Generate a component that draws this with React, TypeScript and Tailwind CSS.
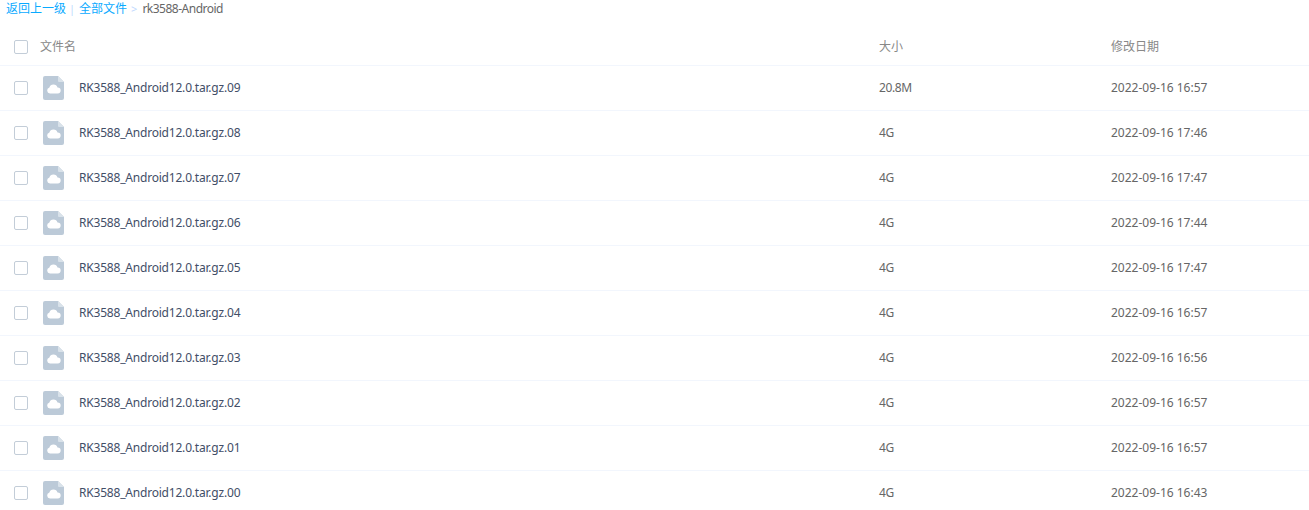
const files = [
  { name: "RK3588_Android12.0.tar.gz.09", size: "20.8M", time: "2022-09-16 16:57" },
  { name: "RK3588_Android12.0.tar.gz.08", size: "4G", time: "2022-09-16 17:46" },
  { name: "RK3588_Android12.0.tar.gz.07", size: "4G", time: "2022-09-16 17:47" },
  { name: "RK3588_Android12.0.tar.gz.06", size: "4G", time: "2022-09-16 17:44" },
  { name: "RK3588_Android12.0.tar.gz.05", size: "4G", time: "2022-09-16 17:47" },
  { name: "RK3588_Android12.0.tar.gz.04", size: "4G", time: "2022-09-16 16:57" },
  { name: "RK3588_Android12.0.tar.gz.03", size: "4G", time: "2022-09-16 16:56" },
  { name: "RK3588_Android12.0.tar.gz.02", size: "4G", time: "2022-09-16 16:57" },
  { name: "RK3588_Android12.0.tar.gz.01", size: "4G", time: "2022-09-16 16:57" },
  { name: "RK3588_Android12.0.tar.gz.00", size: "4G", time: "2022-09-16 16:43" },
];

function FileIcon() {
  return (
    <svg width="21" height="24" viewBox="0 0 21 24" className="shrink-0">
      <path d="M2 0H15L21 6V22a2 2 0 0 1-2 2H2a2 2 0 0 1-2-2V2a2 2 0 0 1 2-2Z" fill="#bccad8" />
      <path d="M15 0L21 6H16a1 1 0 0 1-1-1Z" fill="#d9e2ea" />
      <path
        d="M7 17.5a3 3 0 0 1-.6-5.9 4.2 4.2 0 0 1 8.1-.1 3 3 0 0 1 .3 6Z"
        fill="#ffffff"
      />
    </svg>
  );
}

function Check() {
  return <span className="block w-[14px] h-[14px] rounded-[2px] border border-[#c3cdd8] bg-white shrink-0" />;
}

export default function App() {
  return (
    <div className="w-[1309px] h-[510px] overflow-hidden bg-white text-[12px] text-[#666] font-['Noto_Sans','Noto_Sans_CJK_SC',sans-serif]">
      <div className="h-[17px] pl-[6px] flex items-center leading-[17px]">
        <span className="text-[#09aaff]">返回上一级</span>
        <span className="text-[#c0d9fe] ml-[3px] mr-[4px] text-[11px]">|</span>
        <span className="text-[#09aaff]">全部文件</span>
        <span className="text-[#c0d9fe] ml-[4px] mr-[5px] text-[11px]">&gt;</span>
        <span className="text-[#666] tracking-[-0.5px]">rk3588-Android</span>
      </div>
      <div className="h-[49px] pt-[12px] flex items-center border-b border-[#f2f6fd] text-[#888]">
        <div className="w-[40px] pl-[14px] shrink-0"><Check /></div>
        <div className="w-[839px]">文件名</div>
        <div className="w-[232px]">大小</div>
        <div>修改日期</div>
      </div>
      {files.map((f) => (
        <div key={f.name} className="h-[45px] flex items-center border-b border-[#f2f6fd]">
          <div className="w-[43px] pl-[14px] shrink-0"><Check /></div>
          <div className="w-[36px] shrink-0"><FileIcon /></div>
          <div className="w-[800px] text-[#424e67] tracking-[-0.2px]">{f.name}</div>
          <div className="w-[232px] tracking-[-0.4px]">{f.size}</div>
          <div>{f.time}</div>
        </div>
      ))}
    </div>
  );
}
